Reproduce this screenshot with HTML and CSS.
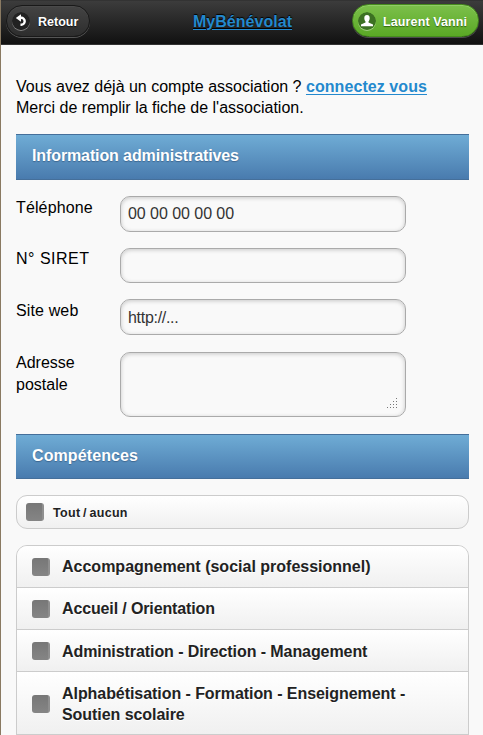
FILE: index.html
```html
<!DOCTYPE html>
<html lang="fr">
<head>
<meta charset="utf-8">
<title>MyBénévolat</title>
<link rel="stylesheet" href="styles.css">
</head>
<body>
<header class="bar">
  <a class="btn btn-back"><svg class="icon" viewBox="0 0 18 18"><circle cx="9" cy="9" r="9" fill="#222"/><path d="M8 5.800h1.200a3.500 3.500 0 0 1 0 7H8.500" fill="none" stroke="#fff" stroke-width="2.400"/><path d="M3.800 6.100L9 2.200v7.600z" fill="#fff"/></svg><span class="t-back">Retour</span></a>
  <h1><a>MyBénévolat</a></h1>
  <a class="btn btn-user"><svg class="icon" viewBox="0 0 18 18"><circle cx="9" cy="9" r="9" fill="#3c7122"/><path d="M9 3.1c-1.8 0-2.7 1.3-2.7 3 0 1.500.5 2.600 1.200 3.300v1.200L3 12.500v1.800h12v-1.800l-4.500-1.900V9.400c.7-.7 1.200-1.800 1.200-3.300 0-1.700-.9-3-2.700-3z" fill="#fff"/></svg><span class="t-user">Laurent Vanni</span></a>
</header>
<main>
  <p class="intro">Vous avez déjà un compte association ? <a class="link">connectez vous</a><br>Merci de remplir la fiche de l'association.</p>
  <h2><span class="t-info">Information administratives</span></h2>
  <form>
    <div class="field"><label class="t-tel">Téléphone</label><div class="input tall t-num">00 00 00 00 00</div></div>
    <div class="field"><label class="t-siret">N° SIRET</label><div class="input"></div></div>
    <div class="field"><label class="t-tel">Site web</label><div class="input tall t-url">http://...</div></div>
    <div class="field"><label>Adresse<br>postale</label><div class="input area"><svg class="grip" viewBox="0 0 11 10"><path d="M9 0h1v1H9zM6 3h1v1H6zM9 3h1v1H9zM3 6h1v1H3zM6 6h1v1H6zM9 6h1v1H9zM0 9h1v1H0zM3 9h1v1H3zM6 9h1v1H6zM9 9h1v1H9z" fill="#777"/></svg></div></div>
  </form>
  <h2 class="second"><span class="t-comp">Compétences</span></h2>
  <div class="all"><i class="box"></i><span class="t-all">Tout / aucun</span></div>
  <ul>
    <li><i class="box"></i><span>Accompagnement (social professionnel)</span></li>
    <li><i class="box"></i><span class="t-orient">Accueil / Orientation</span></li>
    <li><i class="box"></i><span class="t-row low">Administration - Direction - Management</span></li>
    <li class="two"><i class="box"></i><span class="t-long">Alphabétisation - Formation - Enseignement -<br>Soutien scolaire</span></li>
  </ul>
</main>
</body>
</html>
```
FILE: styles.css
```css
* { box-sizing: border-box; }
html { overflow: hidden; background: #f9f9f9; }
body {
  margin: 0;
  height: 735px;
  overflow: hidden;
  border-left: 1px solid #8a7a62;
  background: #f9f9f9;
  color: #000;
  font: 16px/21px "Liberation Sans", Arial, sans-serif;
}
.bar {
  height: 45px;
  display: grid;
  grid-template-columns: 84px 1fr 127px;
  align-items: start;
  padding: 4px 4px 0 5px;
  border-top: 1px solid #333;
  border-bottom: 1px solid #333;
  background: linear-gradient(#3c3c3c, #111);
}
.btn {
  height: 33px;
  display: flex;
  align-items: center;
  border-radius: 17px;
  font-size: 12.5px;
  font-weight: bold;
  color: #fff;
  white-space: nowrap;
}
.btn-back {
  height: 32px;
  padding-left: 5px;
  border: 1px solid #191919;
  background: linear-gradient(#444, #2d2d2d);
  box-shadow: inset 0 1px 0 #4a4a4a, 0 1px 0 #555;
  text-shadow: 0 1px 1px #111;
}
.btn-user {
  margin-top: -1px;
  padding-left: 5px;
  border: 1px solid #468c1d;
  background: linear-gradient(#7cc04b, #5aa825);
  box-shadow: inset 0 1px 0 #91cc68, 0 1px 0 #4c4c4c;
  text-shadow: 0 1px 1px #336611;
}
.t-back, .t-user { padding-top: 3px; }
.t-back { padding-top: 2px; padding-left: 1px; }
.t-user { letter-spacing: .12px; }
.icon { width: 18px; height: 18px; margin-right: 7px; border-radius: 9px; box-shadow: 0 1px 0 rgba(255,255,255,.4); }
h1 {
  margin: 6px 0 0 103px;
  font-size: 16px;
  line-height: 21px;
  letter-spacing: .03px;
  text-shadow: 0 -1px 1px #000;
  white-space: nowrap;
}
h1 a, .link { color: #2489ce; font-weight: bold; text-decoration: underline; text-underline-offset: 2px; text-decoration-thickness: 1px; }
.link { letter-spacing: .07px; }
main { padding: 31px 14px 0 15px; }
.intro { margin: 0 0 16px; white-space: nowrap; }
h2 {
  height: 46px;
  margin: 0;
  padding: 0 16px 3px;
  display: flex;
  align-items: center;
  border: solid #456f9a;
  border-width: 1px 0;
  background: linear-gradient(#6facd5, #497bae);
  color: #fff;
  font-size: 16px;
  text-shadow: 0 1px 1px #3e6790;
}
h2.second { height: 45px; padding-bottom: 2px; }
.t-info { letter-spacing: -.11px; }
.t-comp { letter-spacing: .1px; }
form { display: flex; flex-direction: column; gap: 16px; padding: 16px 0 17px; }
.field { display: flex; align-items: flex-start; }
label { width: 104px; padding-top: 1px; line-height: 22px; }
.t-tel { letter-spacing: .13px; }
.t-siret { padding-top: 0; letter-spacing: .5px; }
.input {
  width: 286px;
  height: 35px;
  padding: 0 7px;
  border: 1px solid #aaa;
  border-radius: 10px;
  box-shadow: inset 0 1px 4px rgba(0,0,0,.2);
  color: #333;
  line-height: 34px;
}
.tall { height: 36px; }
.t-num { letter-spacing: -.05px; }
.t-url { letter-spacing: -.3px; line-height: 36px; }
.area { height: 65px; margin-top: 1px; display: flex; justify-content: flex-end; align-items: flex-end; }
.grip { width: 11px; height: 10px; margin-bottom: 8px; }
.all, ul { border: 1px solid #ccc; color: #222; font-weight: bold; text-shadow: 0 1px 0 #fff; }
.all {
  height: 34px;
  margin: 16px 0;
  padding-left: 9px;
  display: flex;
  align-items: center;
  gap: 9px;
  border-radius: 11px;
  background: linear-gradient(#fff, #f0f0f0);
  font-size: 12.5px;
}
.t-all { padding-top: 2px; letter-spacing: .3px; word-spacing: -1.1px; }
.box {
  flex: none;
  width: 18px;
  height: 18px;
  border-radius: 3px;
  background: linear-gradient(to right, transparent 16px, #8f8f8f 16px), linear-gradient(#777, #858585);
}
ul { list-style: none; margin: 0; padding: 0; border-radius: 11px 11px 0 0; overflow: hidden; white-space: nowrap; }
li {
  height: 42px;
  padding-left: 15px;
  display: flex;
  align-items: center;
  gap: 12px;
  border-bottom: 1px solid #ccc;
  background: linear-gradient(#fff, #f0f0f0);
}
li.two { height: 63px; padding-top: 2px; }
.t-row { letter-spacing: -.08px; }
.t-orient { letter-spacing: -.13px; }
.t-long { letter-spacing: -.06px; }
.low { padding-top: 2px; }
```
